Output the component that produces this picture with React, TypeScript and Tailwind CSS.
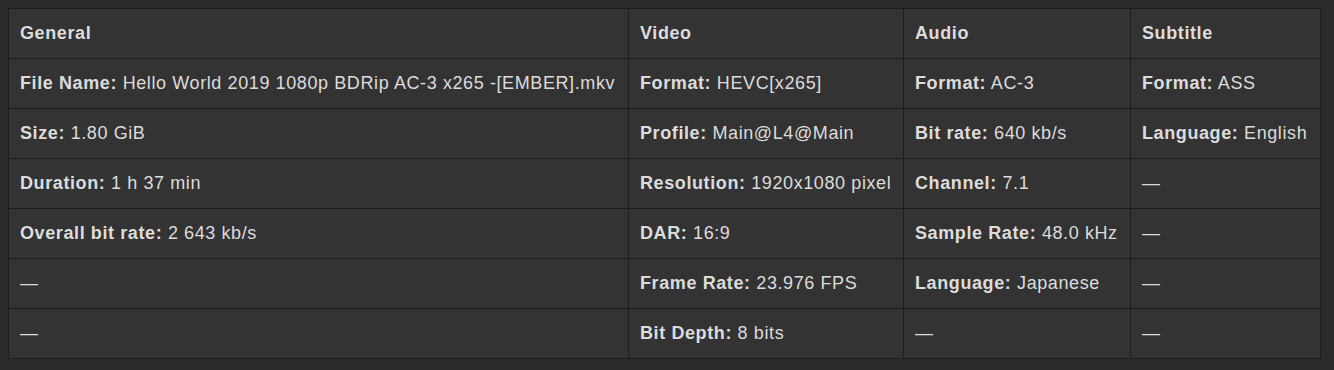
const headers = ['General', 'Video', 'Audio', 'Subtitle'];

type Cell = [string, string] | null;

const rows: Cell[][] = [
  [['File Name', 'Hello World 2019 1080p BDRip AC-3 x265 -[EMBER].mkv'], ['Format', 'HEVC[x265]'], ['Format', 'AC-3'], ['Format', 'ASS']],
  [['Size', '1.80 GiB'], ['Profile', 'Main@L4@Main'], ['Bit rate', '640 kb/s'], ['Language', 'English']],
  [['Duration', '1 h 37 min'], ['Resolution', '1920x1080 pixel'], ['Channel', '7.1'], null],
  [['Overall bit rate', '2 643 kb/s'], ['DAR', '16:9'], ['Sample Rate', '48.0 kHz'], null],
  [null, ['Frame Rate', '23.976 FPS'], ['Language', 'Japanese'], null],
  [null, ['Bit Depth', '8 bits'], null, null],
];

export default function App() {
  return (
    <div className="min-h-[370px] bg-[#2b2b2b] p-2 font-['Liberation_Sans',Arial,sans-serif] text-[18px] tracking-[0.6px] text-[#dcdcdc]">
      <table className="w-[1312px] table-fixed border-collapse bg-[#333333]">
        <colgroup>
          <col className="w-[620px]" />
          <col className="w-[275px]" />
          <col className="w-[227px]" />
          <col className="w-[190px]" />
        </colgroup>
        <thead>
          <tr>
            {headers.map((h) => (
              <th key={h} className="h-[50px] border border-[#1e1e1e] pl-[11px] pr-2 text-left font-bold">
                {h}
              </th>
            ))}
          </tr>
        </thead>
        <tbody>
          {rows.map((row, i) => (
            <tr key={i}>
              {row.map((cell, j) => (
                <td key={j} className="h-[50px] whitespace-nowrap border border-[#1e1e1e] pl-[11px] pr-2">
                  {cell ? (
                    <>
                      <span className="font-bold">{cell[0]}:</span> {cell[1]}
                    </>
                  ) : (
                    '—'
                  )}
                </td>
              ))}
            </tr>
          ))}
        </tbody>
      </table>
    </div>
  );
}
